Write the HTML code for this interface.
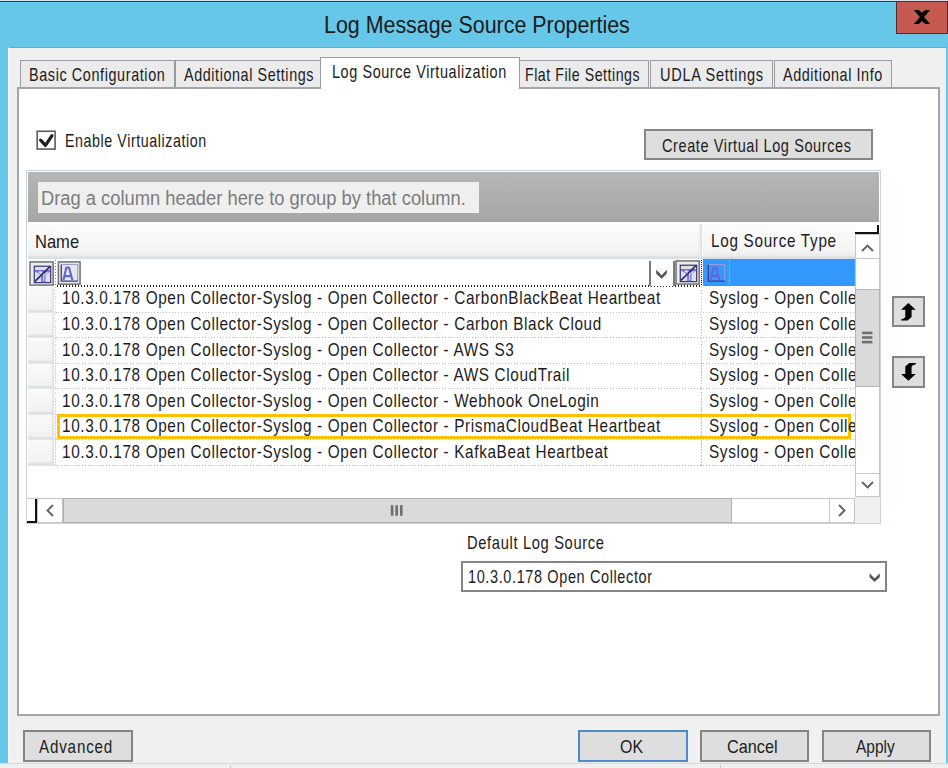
<!DOCTYPE html>
<html><head><meta charset="utf-8"><style>
*{margin:0;padding:0;box-sizing:border-box}
html,body{width:948px;height:768px;overflow:hidden;background:#f0f0f0;font-family:"Liberation Sans",sans-serif;position:relative}
.a{position:absolute}
.t{position:absolute;white-space:nowrap;transform-origin:0 0;color:#000}
.rh{position:absolute;left:28px;width:26px;background:linear-gradient(90deg,transparent 88%,#dedede),linear-gradient(#fafafa,#f2f2f2 85%,#dcdcdc 92%,#e4eeee)}
.dl{position:absolute;left:55px;width:800px;height:1px;background:repeating-linear-gradient(90deg,#c4c4c4 0 1.5px,transparent 1.5px 3px)}
.btn{position:absolute;background:#dedede;border:2px solid #858585}
</style></head><body>
<div class="a" style="left:0;top:0;width:948px;height:1px;background:#d9e1ef"></div>
<div class="a" style="left:0;top:1px;width:948px;height:1px;background:#2e3439"></div>
<div class="a" style="left:0;top:2px;width:948px;height:761px;background:#66c7e9"></div>
<div class="a" style="left:0;top:2px;width:896px;height:1px;background:#64d3f5"></div>
<div class="a" style="left:896px;top:1px;width:52px;height:33px;background:#c65a50;border:1px solid #4a2e2e"></div>
<svg class="a" style="left:906px;top:4px" width="32" height="26" viewBox="0 0 945 768"><path d="M230,180 L380,180 L470,262 L565,180 L715,180 L532,385 L715,590 L565,590 L470,505 L380,590 L230,590 L410,385 Z" fill="#000"/></svg>
<div class="t" style="left:324.09px;top:14.48px;font-size:23.5px;line-height:23.5px;letter-spacing:0.000px;transform:scaleX(0.9109);color:#1c1c1c">Log Message Source Properties</div>
<div class="a" style="left:8px;top:47px;width:938px;height:716px;background:#f0f0f0;border-top:1px solid #74a4bc;border-left:1px solid #fafafa"></div>
<div class="a" style="left:0;top:763px;width:948px;height:1px;background:#d7d7d7"></div>
<div class="a" style="left:0;top:764px;width:948px;height:4px;background:#f0f0f0"></div>
<div class="a" style="left:230px;top:765px;width:1px;height:3px;background:#c8c8c8"></div>
<div class="a" style="left:720px;top:765px;width:1px;height:3px;background:#c8c8c8"></div>
<!-- tabs -->
<div class="a" style="left:20px;top:60px;width:155px;height:28px;background:#ebebeb;border:1px solid #9a9ba3;border-bottom:0"></div>
<div class="a" style="left:175px;top:60px;width:146px;height:28px;background:#ebebeb;border:1px solid #9a9ba3;border-bottom:0"></div>
<div class="a" style="left:519px;top:60px;width:130px;height:28px;background:#ebebeb;border:1px solid #9a9ba3;border-bottom:0"></div>
<div class="a" style="left:650px;top:60px;width:123px;height:28px;background:#ebebeb;border:1px solid #9a9ba3;border-bottom:0"></div>
<div class="a" style="left:774px;top:60px;width:118px;height:28px;background:#ebebeb;border:1px solid #9a9ba3;border-bottom:0"></div>
<div class="a" style="left:17px;top:87px;width:923px;height:629px;background:#fff;border:2px solid #a2a5ad"></div>
<div class="a" style="left:320px;top:57px;width:200px;height:32px;background:#fff;border:1px solid #9a9ba3;border-bottom:0"></div>
<div class="t" style="left:29.24px;top:65.22px;font-size:19px;line-height:19px;letter-spacing:0.788px;transform:scaleX(0.7588);color:#1c1c1c">Basic Configuration</div>
<div class="t" style="left:184.30px;top:65.22px;font-size:19px;line-height:19px;letter-spacing:0.758px;transform:scaleX(0.7571);color:#1c1c1c">Additional Settings</div>
<div class="t" style="left:332.44px;top:62.22px;font-size:19px;line-height:19px;letter-spacing:0.758px;transform:scaleX(0.7603);color:#1c1c1c">Log Source Virtualization</div>
<div class="t" style="left:525.25px;top:65.22px;font-size:19px;line-height:19px;letter-spacing:0.716px;transform:scaleX(0.7459);color:#1c1c1c">Flat File Settings</div>
<div class="t" style="left:659.83px;top:65.22px;font-size:19px;line-height:19px;letter-spacing:0.892px;transform:scaleX(0.7682);color:#1c1c1c">UDLA Settings</div>
<div class="t" style="left:782.60px;top:65.22px;font-size:19px;line-height:19px;letter-spacing:0.744px;transform:scaleX(0.7584);color:#1c1c1c">Additional Info</div>
<!-- checkbox -->
<svg class="a" style="left:30px;top:125px" width="32" height="32" viewBox="0 0 768 768"><rect x="172" y="150" width="430" height="428" fill="#fff" stroke="#5a5a5a" stroke-width="38"/><path d="M255,365 L370,490 L525,260" stroke="#1e1e1e" stroke-width="78" fill="none" stroke-linecap="round" stroke-linejoin="round"/></svg>
<div class="t" style="left:65.25px;top:131.22px;font-size:19px;line-height:19px;letter-spacing:0.745px;transform:scaleX(0.7519);color:#1c1c1c">Enable Virtualization</div>
<div class="btn" style="left:644px;top:129px;width:229px;height:31px"></div>
<div class="t" style="left:661.50px;top:135.82px;font-size:19px;line-height:19px;letter-spacing:0.791px;transform:scaleX(0.7634);color:#1c1c1c">Create Virtual Log Sources</div>
<!-- grid -->
<div class="a" style="left:26px;top:170px;width:855px;height:354px;background:#fff;border:1px solid #c5d3e0"></div>
<div class="a" style="left:28px;top:172px;width:851px;height:50px;background:linear-gradient(#b6b6b6,#a6a6a6)"></div>
<div class="a" style="left:38px;top:182px;width:441px;height:31px;background:#efefef"></div>
<div class="t" style="left:41.06px;top:189.31px;font-size:19.5px;line-height:19.5px;letter-spacing:0.000px;transform:scaleX(0.9400);color:#7c7c7c">Drag a column header here to group by that column.</div>
<div class="a" style="left:28px;top:222px;width:827px;height:37px;background:linear-gradient(#fdfdfd,#f3f3f3 80%,#e6e6e6)"></div>
<div class="a" style="left:699px;top:224px;width:3px;height:34px;background:linear-gradient(90deg,#f0f0f0,#dcdcdc)"></div><div class="a" style="left:702px;top:223px;width:1px;height:35px;background:#fff"></div><div class="a" style="left:28px;top:256px;width:827px;height:2px;background:#e2e2e2"></div>
<div class="t" style="left:35.03px;top:231.72px;font-size:19px;line-height:19px;letter-spacing:0.000px;transform:scaleX(0.8694);color:#1c1c1c">Name</div>
<div class="t" style="left:711.00px;top:230.82px;font-size:19px;line-height:19px;letter-spacing:0.883px;transform:scaleX(0.8036);color:#1c1c1c">Log Source Type</div>
<div class="a" style="left:28px;top:258px;width:827px;height:1px;background:#d5dde5"></div>
<!-- filter row -->
<svg class="a" style="left:28px;top:259px" width="28" height="28" viewBox="0 0 768 768"><rect x="55" y="80" width="635" height="635" fill="#ececec" stroke="#737373" stroke-width="42"/><rect x="172" y="198" width="450" height="450" fill="#e0e0e0" stroke="#2e2e78" stroke-width="32"/><path d="M188,300 L606,300 L606,340 L480,440 L480,635 L360,635 L360,440 L188,340 Z" fill="#7272d8"/><path d="M290,360 L380,360 L410,420 Z M430,610 L430,440 L540,360" stroke="#fff" stroke-width="30" fill="none" opacity=".8"/><path d="M190,612 L602,212" stroke="#2e2e78" stroke-width="48"/></svg>
<div class="a" style="left:55px;top:260px;width:1px;height:26px;background:repeating-linear-gradient(180deg,#3d8ee0 0 1.5px,transparent 1.5px 3px)"></div>
<svg class="a" style="left:54px;top:259px" width="28" height="28" viewBox="0 0 768 768"><rect x="120" y="80" width="595" height="610" fill="#e6e6e6" stroke="#737373" stroke-width="42"/><path d="M205,150 L650,150 L650,600" stroke="#9a9ad8" stroke-width="30" fill="none"/><path d="M200,160 L200,605 L655,605" stroke="#3c3c8c" stroke-width="36" fill="none"/><path d="M258,585 L338,232 L412,232 L505,585 M292,470 L470,470" stroke="#6464d2" stroke-width="58" fill="none" stroke-linejoin="bevel"/></svg>
<div class="a" style="left:57px;top:285px;width:645px;height:2px;background:repeating-linear-gradient(90deg,#222 0 1.5px,transparent 1.5px 3px)"></div>
<div class="a" style="left:649px;top:261px;width:26px;height:25px;background:#fff;border-left:2px solid #7a7a7a;border-right:2px solid #7a7a7a"></div>
<svg class="a" style="left:646px;top:258px" width="30" height="30" viewBox="0 0 768 768"><path d="M262,300 L400,440 L532,300 L532,400 L400,532 L262,400 Z" fill="#555"/></svg>
<svg class="a" style="left:674px;top:258px" width="28" height="28" viewBox="0 0 768 768"><rect x="55" y="80" width="635" height="635" fill="#ececec" stroke="#737373" stroke-width="42"/><rect x="172" y="198" width="450" height="450" fill="#e0e0e0" stroke="#2e2e78" stroke-width="32"/><path d="M188,300 L606,300 L606,340 L480,440 L480,635 L360,635 L360,440 L188,340 Z" fill="#7272d8"/><path d="M290,360 L380,360 L410,420 Z M430,610 L430,440 L540,360" stroke="#fff" stroke-width="30" fill="none" opacity=".8"/><path d="M190,612 L602,212" stroke="#2e2e78" stroke-width="48"/></svg>
<div class="a" style="left:701px;top:260px;width:1px;height:26px;background:repeating-linear-gradient(180deg,#222 0 1px,transparent 1px 2px)"></div>
<div class="a" style="left:703px;top:259px;width:152px;height:27px;background:#3399ff"></div>
<svg class="a" style="left:701px;top:259px" width="28" height="28" viewBox="0 0 768 768"><path d="M205,150 L650,150 L650,600" stroke="#9a9ad8" stroke-width="30" fill="none"/><path d="M200,160 L200,605 L655,605" stroke="#3c3c8c" stroke-width="36" fill="none"/><path d="M258,585 L338,232 L412,232 L505,585 M292,470 L470,470" stroke="#6464d2" stroke-width="58" fill="none" stroke-linejoin="bevel"/></svg>
<div class="a" style="left:729px;top:260px;width:1px;height:25px;border-left:1px dotted #a0c8f0"></div>
<!-- rows -->
<div class="a" style="left:701px;top:287px;width:1px;height:179px;background:repeating-linear-gradient(180deg,#c4c4c4 0 1.5px,transparent 1.5px 3px)"></div>
<div class="a" style="left:55px;top:287px;width:1px;height:179px;background:repeating-linear-gradient(180deg,#d4d4d4 0 1.5px,transparent 1.5px 3px)"></div>
<div class="rh" style="top:287px;height:26px"></div>
<div class="dl" style="top:312px"></div>
<div class="t" style="left:62.19px;top:288.42px;font-size:19px;line-height:19px;letter-spacing:0.780px;transform:scaleX(0.8067);color:#1c1c1c">10.3.0.178 Open Collector-Syslog - Open Collector - CarbonBlackBeat Heartbeat</div>
<div class="rh" style="top:313px;height:25px"></div>
<div class="dl" style="top:337px"></div>
<div class="t" style="left:62.19px;top:313.99px;font-size:19px;line-height:19px;letter-spacing:0.780px;transform:scaleX(0.8067);color:#1c1c1c">10.3.0.178 Open Collector-Syslog - Open Collector - Carbon Black Cloud</div>
<div class="rh" style="top:338px;height:26px"></div>
<div class="dl" style="top:363px"></div>
<div class="t" style="left:62.19px;top:339.56px;font-size:19px;line-height:19px;letter-spacing:0.780px;transform:scaleX(0.8067);color:#1c1c1c">10.3.0.178 Open Collector-Syslog - Open Collector - AWS S3</div>
<div class="rh" style="top:364px;height:25px"></div>
<div class="dl" style="top:388px"></div>
<div class="t" style="left:62.19px;top:365.13px;font-size:19px;line-height:19px;letter-spacing:0.780px;transform:scaleX(0.8067);color:#1c1c1c">10.3.0.178 Open Collector-Syslog - Open Collector - AWS CloudTrail</div>
<div class="rh" style="top:389px;height:26px"></div>
<div class="dl" style="top:414px"></div>
<div class="t" style="left:62.19px;top:390.70px;font-size:19px;line-height:19px;letter-spacing:0.780px;transform:scaleX(0.8067);color:#1c1c1c">10.3.0.178 Open Collector-Syslog - Open Collector - Webhook OneLogin</div>
<div class="rh" style="top:415px;height:25px"></div>
<div class="dl" style="top:439px"></div>
<div class="t" style="left:62.19px;top:416.27px;font-size:19px;line-height:19px;letter-spacing:0.780px;transform:scaleX(0.8067);color:#1c1c1c">10.3.0.178 Open Collector-Syslog - Open Collector - PrismaCloudBeat Heartbeat</div>
<div class="rh" style="top:440px;height:26px"></div>
<div class="dl" style="top:465px"></div>
<div class="t" style="left:62.19px;top:441.84px;font-size:19px;line-height:19px;letter-spacing:0.780px;transform:scaleX(0.8067);color:#1c1c1c">10.3.0.178 Open Collector-Syslog - Open Collector - KafkaBeat Heartbeat</div><div class="a" style="left:57px;top:414px;width:794px;height:25px;border:3px solid #ffc000"></div><div class="a" style="left:702px;top:287px;width:153px;height:180px;overflow:hidden"><div class="t" style="left:6.99px;top:1.42px;font-size:19px;line-height:19px;letter-spacing:0.780px;transform:scaleX(0.8067);color:#1c1c1c">Syslog - Open Collector</div><div class="t" style="left:6.99px;top:26.99px;font-size:19px;line-height:19px;letter-spacing:0.780px;transform:scaleX(0.8067);color:#1c1c1c">Syslog - Open Collector</div><div class="t" style="left:6.99px;top:52.56px;font-size:19px;line-height:19px;letter-spacing:0.780px;transform:scaleX(0.8067);color:#1c1c1c">Syslog - Open Collector</div><div class="t" style="left:6.99px;top:78.13px;font-size:19px;line-height:19px;letter-spacing:0.780px;transform:scaleX(0.8067);color:#1c1c1c">Syslog - Open Collector</div><div class="t" style="left:6.99px;top:103.70px;font-size:19px;line-height:19px;letter-spacing:0.780px;transform:scaleX(0.8067);color:#1c1c1c">Syslog - Open Collector</div><div class="t" style="left:6.99px;top:129.27px;font-size:19px;line-height:19px;letter-spacing:0.780px;transform:scaleX(0.8067);color:#1c1c1c">Syslog - Open Collector</div><div class="t" style="left:6.99px;top:154.84px;font-size:19px;line-height:19px;letter-spacing:0.780px;transform:scaleX(0.8067);color:#1c1c1c">Syslog - Open Collector</div></div>
<!-- vscroll -->
<div class="a" style="left:855px;top:233px;width:25px;height:265px;background:#fff;border-left:1px solid #c6c6c6;border-right:1px solid #c6c6c6"></div>
<div class="a" style="left:855px;top:232px;width:24px;height:2px;background:#111"></div>
<div class="a" style="left:877px;top:225px;width:2px;height:9px;background:#111"></div>
<div class="a" style="left:855px;top:234px;width:25px;height:25px;background:#fff;border:1px solid #c6c6c6"></div>
<svg class="a" style="left:860px;top:242px" width="15" height="12"><path d="M2 9 L7.5 3.5 L13 9" stroke="#646464" stroke-width="1.9" fill="none"/></svg>
<div class="a" style="left:855px;top:289px;width:25px;height:98px;background:#dadada;border:1px solid #b4b4b4"></div>
<svg class="a" style="left:850px;top:320px" width="35" height="35"><rect x="12" y="11.6" width="10.4" height="2.6" fill="#707070"/><rect x="12" y="16.2" width="10.4" height="2.6" fill="#707070"/><rect x="12" y="20.8" width="10.4" height="2.6" fill="#707070"/></svg>
<div class="a" style="left:855px;top:473px;width:25px;height:24px;background:#fff;border:1px solid #c6c6c6"></div>
<svg class="a" style="left:860px;top:479px" width="15" height="12"><path d="M2 3 L7.5 8.5 L13 3" stroke="#646464" stroke-width="1.9" fill="none"/></svg>
<!-- hscroll -->
<div class="a" style="left:27px;top:498px;width:853px;height:25px;background:#fff;border-top:1px solid #c6c6c6;border-bottom:1px solid #c6c6c6"></div>
<div class="a" style="left:37px;top:498px;width:26px;height:25px;background:#fff;border:1px solid #c6c6c6"></div>
<svg class="a" style="left:44px;top:503px" width="12" height="15"><path d="M9 2 L3.5 7.5 L9 13" stroke="#646464" stroke-width="1.9" fill="none"/></svg>
<div class="a" style="left:63px;top:498px;width:669px;height:25px;background:#dadada;border:1px solid #b0b0b0"></div>
<svg class="a" style="left:380px;top:500px" width="30" height="20"><rect x="10.8" y="5.2" width="2.6" height="10.5" fill="#707070"/><rect x="15.4" y="5.2" width="2.6" height="10.5" fill="#707070"/><rect x="20" y="5.2" width="2.6" height="10.5" fill="#707070"/></svg>
<div class="a" style="left:829px;top:498px;width:26px;height:25px;background:#fff;border:1px solid #c6c6c6"></div>
<svg class="a" style="left:836px;top:503px" width="12" height="15"><path d="M3 2 L8.5 7.5 L3 13" stroke="#646464" stroke-width="1.9" fill="none"/></svg>
<div class="a" style="left:855px;top:497px;width:25px;height:26px;background:#f0f0f0"></div>
<div class="a" style="left:35px;top:499px;width:2px;height:24px;background:#111"></div>
<div class="a" style="left:27px;top:521px;width:10px;height:2px;background:#111"></div>
<!-- move buttons -->
<div class="btn" style="left:892px;top:296px;width:33px;height:31px"></div>
<svg class="a" style="left:896px;top:298px" width="26" height="26" viewBox="0 0 768 768"><path d="M365,150 L585,345 L460,345 L460,560 L340,665 L150,665 L150,635 L240,600 L275,560 L275,345 L150,345 Z" fill="#000"/></svg>
<div class="btn" style="left:892px;top:356px;width:33px;height:32px"></div>
<svg class="a" style="left:896px;top:358px" width="26" height="26" viewBox="0 0 768 768"><path d="M365,670 L150,470 L275,470 L275,250 L390,150 L585,150 L585,185 L495,215 L460,255 L460,470 L585,470 Z" fill="#000"/></svg>
<!-- default log source -->
<div class="t" style="left:467.32px;top:532.82px;font-size:19px;line-height:19px;letter-spacing:0.824px;transform:scaleX(0.7756);color:#1c1c1c">Default Log Source</div>
<div class="a" style="left:461px;top:561px;width:426px;height:31px;background:#fff;border:2px solid #858585"></div>
<div class="t" style="left:468.04px;top:567.22px;font-size:19px;line-height:19px;letter-spacing:0.802px;transform:scaleX(0.7635);color:#1c1c1c">10.3.0.178 Open Collector</div>
<svg class="a" style="left:860px;top:562px" width="30" height="30" viewBox="0 0 768 768"><path d="M245,285 L375,420 L505,285 L505,390 L375,510 L245,390 Z" fill="#555"/></svg>
<!-- bottom buttons -->
<div class="btn" style="left:23px;top:730px;width:110px;height:32px"></div>
<div class="t" style="left:39.00px;top:736.92px;font-size:19px;line-height:19px;letter-spacing:1.043px;transform:scaleX(0.7979);color:#1c1c1c">Advanced</div>
<div class="btn" style="left:578px;top:730px;width:110px;height:32px;border-color:#4d8cc4"></div>
<div class="t" style="left:619.70px;top:736.92px;font-size:19px;line-height:19px;letter-spacing:0.000px;transform:scaleX(0.8388);color:#1c1c1c">OK</div>
<div class="btn" style="left:700px;top:730px;width:109px;height:32px"></div>
<div class="t" style="left:727.30px;top:736.92px;font-size:19px;line-height:19px;letter-spacing:0.000px;transform:scaleX(0.8546);color:#1c1c1c">Cancel</div>
<div class="btn" style="left:822px;top:730px;width:109px;height:32px"></div>
<div class="t" style="left:855.70px;top:736.92px;font-size:19px;line-height:19px;letter-spacing:0.000px;transform:scaleX(0.8141);color:#1c1c1c">Apply</div>
</body></html>
